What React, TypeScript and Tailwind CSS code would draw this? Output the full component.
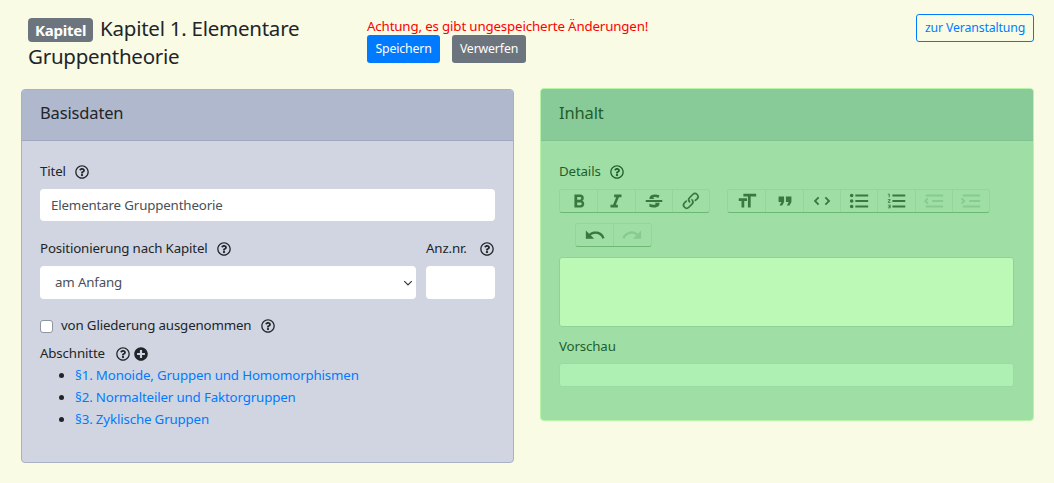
import type { ReactNode } from "react";
import { FaPlusCircle, FaRegQuestionCircle } from "react-icons/fa";

const ICONS: Record<string, string> = {
  bold: "M15.6 11.8c1-.7 1.6-1.8 1.6-2.8a4 4 0 0 0-4-4H7v14h7c2.1 0 3.7-1.7 3.7-3.8 0-1.5-.8-2.8-2.1-3.4zM10 7.5h3a1.5 1.5 0 1 1 0 3h-3v-3zm3.5 9H10v-3h3.5a1.5 1.5 0 1 1 0 3z",
  italic: "M10 5v3h2.2l-3.4 8H6v3h8v-3h-2.2l3.4-8H18V5h-8z",
  strike:
    "M12.73 14l.28.14c.26.15.45.3.57.44.12.14.18.3.18.5 0 .3-.15.56-.44.75-.3.2-.76.3-1.39.3A13.52 13.52 0 0 1 7 14.95v3.37a10.64 10.64 0 0 0 4.84.88c1.26 0 2.35-.19 3.28-.56.93-.37 1.64-.9 2.14-1.57s.74-1.45.74-2.32c0-.26-.02-.51-.06-.75h-5.21zm-5.5-4c-.08-.34-.12-.7-.12-1.1 0-1.29.52-2.3 1.58-3.02 1.05-.72 2.5-1.08 4.34-1.08 1.62 0 3.28.34 4.97 1l-1.3 2.93c-1.47-.6-2.73-1-3.8-1-.55 0-.96.08-1.2.26-.26.17-.38.38-.38.64 0 .27.16.52.48.74.17.12.53.3 1.05.53H7.23zM3 13h18v-2H3v2z",
  link: "M9.88 13.7a4.3 4.3 0 0 1 0-6.07l3.37-3.37a4.26 4.26 0 0 1 6.07 0 4.3 4.3 0 0 1 0 6.06l-1.96 1.72a.91.91 0 1 1-1.3-1.3l1.97-1.71a2.46 2.46 0 0 0-3.48-3.48l-3.38 3.37a2.46 2.46 0 0 0 0 3.48.91.91 0 1 1-1.3 1.3z M4.25 19.46a4.3 4.3 0 0 1 0-6.07l1.93-1.9a.91.91 0 1 1 1.3 1.3l-1.93 1.9a2.46 2.46 0 0 0 3.48 3.48l3.37-3.38c.96-.96.96-2.52 0-3.48a.91.91 0 1 1 1.3-1.3 4.3 4.3 0 0 1 0 6.07l-3.38 3.38a4.26 4.26 0 0 1-6.07 0z",
  heading: "M12 9v3H9v7H6v-7H3V9h9zM8 4h14v3h-6v12h-3V7H8V4z",
  quote: "M6 17h3l2-4V7H5v6h3zm8 0h3l2-4V7h-6v6h3z",
  code: "M18.2 12L15 15.2l1.4 1.4L21 12l-4.6-4.6L15 8.8l3.2 3.2zM5.8 12L9 8.8 7.6 7.4 3 12l4.6 4.6L9 15.2 5.8 12z",
  bullets:
    "M4 4a2 2 0 1 0 0 4 2 2 0 0 0 0-4zm0 6a2 2 0 1 0 0 4 2 2 0 0 0 0-4zm0 6a2 2 0 1 0 0 4 2 2 0 0 0 0-4zm4 3h14v-2H8v2zm0-6h14v-2H8v2zm0-8v2h14V5H8z",
  numbers:
    "M2 17h2v.5H3v1h1v.5H2v1h3v-4H2v1zm1-9h1V4H2v1h1v3zm-1 3h1.8L2 13.1v.9h3v-1H3.2L5 10.9V10H2v1zm5-6v2h14V5H7zm0 14h14v-2H7v2zm0-6h14v-2H7v2z",
  outdent: "M3 19h19v-2H3v2zm7-6h12v-2H10v2zm-8.3-.3l2.8 2.9L6 14.2 4 12l2-2-1.4-1.5L1 12l.7.7zM3 5v2h19V5H3z",
  indent: "M3 19h19v-2H3v2zm7-6h12v-2H10v2zm-6.9-1L1 14.2l1.4 1.4L6 12l-.7-.7-2.9-2.8L1 9.9 3.1 12zM3 5v2h19V5H3z",
  undo: "M12.5 8c-2.6 0-5 1-6.9 2.6L2 7v9h9l-3.6-3.6A8 8 0 0 1 20 16l2.4-.8a10.5 10.5 0 0 0-10-7.2z",
  redo: "M18.4 10.6a10.5 10.5 0 0 0-16.9 4.6L4 16a8 8 0 0 1 12.7-3.6L13 16h9V7l-3.6 3.6z",
};

function Help({ className = "" }: { className?: string }) {
  return <FaRegQuestionCircle className={`h-[14px] w-[14px] shrink-0 ${className}`} />;
}

function ToolButton({ name, disabled }: { name: string; disabled?: boolean }) {
  return (
    <span className="flex h-full w-[37.3px] items-center justify-center border-l border-[#93d69b] first:border-l-0">
      <svg viewBox="0 0 24 24" className={`h-[22px] w-[22px] ${disabled ? "fill-[#86cb8f]" : "fill-[#39793f]"}`}>
        <path d={ICONS[name]} />
      </svg>
    </span>
  );
}

function ToolGroup({ children }: { children: ReactNode }) {
  return (
    <div className="flex h-[24px] rounded-[3px] border border-[#93d69b] border-b-[#6bb873]">{children}</div>
  );
}

export default function App() {
  return (
    <div className="h-[483px] overflow-hidden bg-[#f9fbe5] font-['Noto_Sans',sans-serif] text-[13.3px] tracking-[-0.15px] text-[#212529]">
      <header className="flex h-[88px] pl-[28px] pr-[20px] pt-[14px]">
        <h1 className="w-[339px] text-[20.5px] leading-[28px] font-normal tracking-[-0.25px]">
          <span className="mr-[7px] inline-block rounded-[4px] bg-[#6c757d] px-[7px] text-[15px] leading-[24px] font-bold text-white">
            Kapitel
          </span>
          Kapitel 1. Elementare Gruppentheorie
        </h1>
        <div className="pt-[3px]">
          <p className="leading-[19px] text-[#ff0000]">Achtung, es gibt ungespeicherte Änderungen!</p>
          <div className="mt-[-1px] flex gap-[12px]">
            <button type="button" className="h-[28px] w-[73px] rounded-[3px] bg-[#007bff] text-[12.3px] text-white">
              Speichern
            </button>
            <button type="button" className="h-[28px] w-[74px] rounded-[3px] bg-[#6c757d] text-[12.3px] text-white">
              Verwerfen
            </button>
          </div>
        </div>
        <button
          type="button"
          className="ml-auto h-[28px] w-[118px] rounded-[3px] border border-[#007bff] text-[12.3px] text-[#007bff]"
        >
          zur Veranstaltung
        </button>
      </header>

      <main className="flex items-start gap-[26px] pl-[21px] pr-[20px]">
        <section className="mt-[1px] h-[374px] w-[493px] rounded-[4px] border border-[#a9b0c2] bg-[#d0d5e1]">
          <h2 className="flex h-[51px] items-center rounded-t-[3px] border-b border-[#a0a8bf] bg-[#b0b8cd] pb-[3px] pl-[18px] text-[16.5px] font-normal">
            Basisdaten
          </h2>
          <div className="px-[18px] pt-[21px]">
            <label className="flex h-[20px] items-center gap-[9px]">
              Titel <Help />
            </label>
            <input
              readOnly
              value="Elementare Gruppentheorie"
              className="mt-[7px] h-[32px] w-full rounded-[4px] bg-white px-[11px] text-[#495057] outline-none"
            />
            <div className="mt-[18px] flex gap-[10px]">
              <div className="w-[376px]">
                <label className="flex h-[20px] items-center gap-[9px]">
                  Positionierung nach Kapitel <Help />
                </label>
                <div className="mt-[7px] flex h-[33px] items-center justify-between rounded-[4px] bg-white pl-[15px] pr-[3px] text-[#495057]">
                  am Anfang
                  <svg viewBox="0 0 16 16" className="h-[10px] w-[10px] fill-none stroke-[#343a40] stroke-2">
                    <path d="M2 5l6 6 6-6" />
                  </svg>
                </div>
              </div>
              <div className="flex-1">
                <label className="flex h-[20px] items-center justify-between">
                  Anz.nr. <Help className="mr-[1px]" />
                </label>
                <div className="mt-[7px] h-[33px] rounded-[4px] bg-white" />
              </div>
            </div>
            <div className="mt-[17px] flex h-[20px] items-center">
              <span className="h-[13px] w-[13px] rounded-[3px] border border-[#8f94a0] bg-white" />
              <span className="ml-[8px]">von Gliederung ausgenommen</span>
              <Help className="ml-[10px]" />
            </div>
            <div className="mt-[8px] flex h-[20px] items-center">
              Abschnitte <Help className="ml-[11px]" />
              <FaPlusCircle className="ml-[4px] h-[14px] w-[14px]" />
            </div>
            <ul className="mt-[0px] list-disc pl-[35px] leading-[22px] text-[#007bff] marker:text-[#212529]">
              <li>§1. Monoide, Gruppen und Homomorphismen</li>
              <li>§2. Normalteiler und Faktorgruppen</li>
              <li>§3. Zyklische Gruppen</li>
            </ul>
          </div>
        </section>

        <section className="h-[333px] w-[494px] rounded-[4px] border border-[#b8f4a8] bg-[#9fdfa5] text-[#1f5e2c]">
          <h2 className="flex h-[52px] items-center rounded-t-[3px] border-b border-[#7fc28f] bg-[#89cb98] pb-[3px] pl-[18px] text-[16.5px] font-normal">
            Inhalt
          </h2>
          <div className="pl-[18px] pr-[19px] pt-[21px]">
            <label className="flex h-[20px] items-center gap-[9px]">
              Details <Help />
            </label>
            <div className="mt-[7px] flex flex-wrap justify-start gap-x-[17px] gap-y-[10px]">
              <ToolGroup>
                <ToolButton name="bold" />
                <ToolButton name="italic" />
                <ToolButton name="strike" />
                <ToolButton name="link" />
              </ToolGroup>
              <ToolGroup>
                <ToolButton name="heading" />
                <ToolButton name="quote" />
                <ToolButton name="code" />
                <ToolButton name="bullets" />
                <ToolButton name="numbers" />
                <ToolButton name="outdent" disabled />
                <ToolButton name="indent" disabled />
              </ToolGroup>
              <div className="ml-[16px]">
                <ToolGroup>
                  <ToolButton name="undo" />
                  <ToolButton name="redo" disabled />
                </ToolGroup>
              </div>
            </div>
            <div className="mt-[10px] h-[70px] rounded-[3px] border border-[#8fd298] bg-[#bcf9b6]" />
            <label className="mt-[9px] flex h-[20px] items-center pt-[1px]">Vorschau</label>
            <div className="mt-[7px] h-[24px] rounded-[3px] border border-[#98dca2] bg-[#aef0b3]" />
          </div>
        </section>
      </main>
    </div>
  );
}
